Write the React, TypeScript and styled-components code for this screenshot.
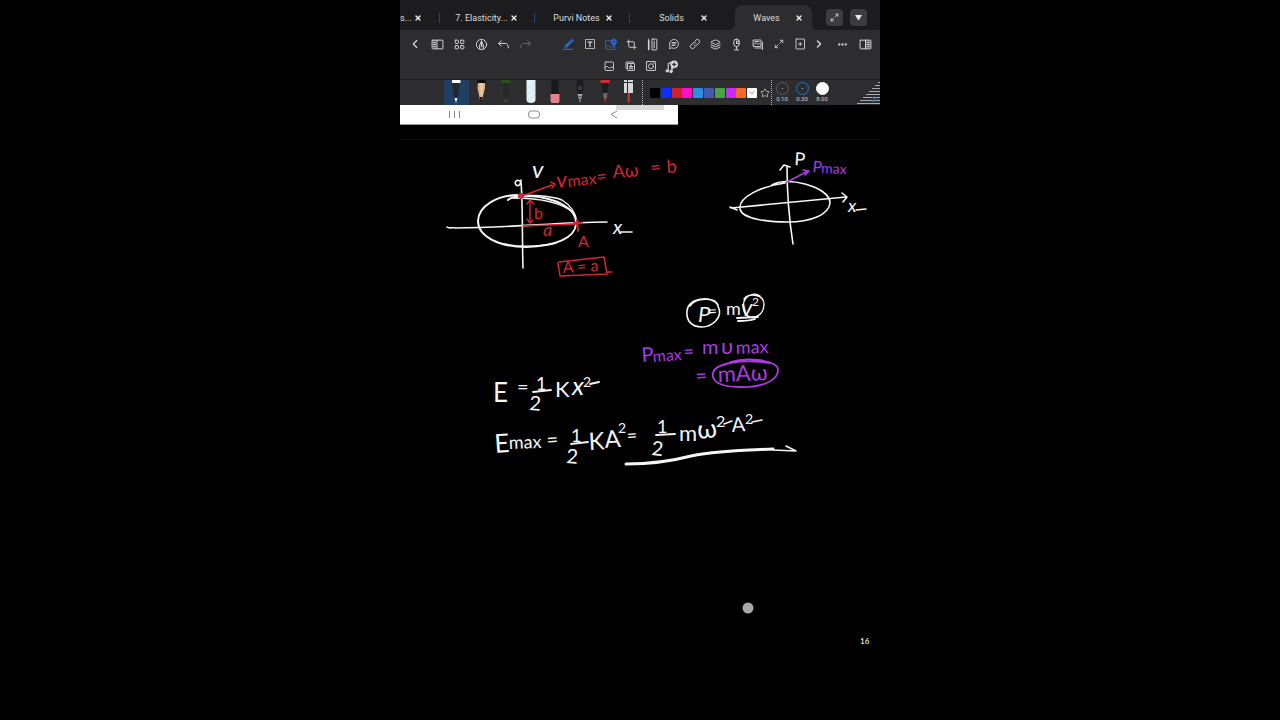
import React from "react";
import styled, { createGlobalStyle, css } from "styled-components";
import {
  ChevronLeft,
  ChevronRight,
  Crop,
  Layers,
  Maximize2,
  MoreHorizontal,
  Star,
  X,
} from "lucide-react";

const GlobalStyle = createGlobalStyle`
  *, *::before, *::after { box-sizing: border-box; }
  body { margin: 0; background: #000; color: #fff; font-family: Roboto, "Liberation Sans", sans-serif; }
  button { font: inherit; color: inherit; background: none; border: 0; padding: 0; margin: 0; }
`;

const Stage = styled.main`
  display: flex;
  justify-content: center;
  min-height: 100vh;
  background: #000;
`;

const Screen = styled.section`
  display: flex;
  flex-direction: column;
  width: 37.5%;
  min-width: 480px;
  overflow: hidden;
`;

/* Document tabs */

const TabBar = styled.nav`
  display: flex;
  align-items: flex-end;
  height: 30px;
  background: #1c1c1e;
`;

const Tab = styled.div<{ $active?: boolean; $clipped?: boolean }>`
  position: relative;
  display: flex;
  align-items: center;
  flex: none;
  width: ${(p) => (p.$clipped ? 40 : 95)}px;
  height: 25px;
  padding-left: ${(p) => (p.$clipped ? 0 : 11)}px;
  ${(p) =>
    p.$active &&
    css`
      width: 77px;
      margin: 0 10px;
      padding-left: 1px;
      border-radius: 8px 8px 0 0;
      background: #2d2d2f;
      &::before,
      &::after {
        content: "";
        position: absolute;
        bottom: 0;
        width: 6px;
        height: 6px;
      }
      &::before {
        right: 100%;
        background: radial-gradient(circle at 0 0, transparent 6px, #2d2d2f 6px);
      }
      &::after {
        left: 100%;
        background: radial-gradient(circle at 100% 0, transparent 6px, #2d2d2f 6px);
      }
    `}
`;

const TabLabel = styled.button<{ $clipped?: boolean }>`
  flex: none;
  width: ${(p) => (p.$clipped ? 12 : 61)}px;
  font-size: 9px;
  line-height: 12px;
  text-align: ${(p) => (p.$clipped ? "left" : "center")};
  white-space: nowrap;
  color: #dcdcdc;
`;

const CloseButton = styled.button<{ $clipped?: boolean }>`
  display: flex;
  margin-left: ${(p) => (p.$clipped ? 0 : -4)}px;
  padding: 2px;
  color: #eee;
`;

const Separator = styled.span`
  align-self: center;
  flex: none;
  width: 1px;
  height: 10px;
  margin: 5px 0 0 -1px;
  background: #1d4a78;
`;

const WindowButtons = styled.div`
  display: flex;
  gap: 7px;
  margin: 0 0 4px 4px;
`;

const WindowButton = styled.button`
  display: grid;
  place-items: center;
  width: 17px;
  height: 17px;
  border-radius: 4px;
  background: #3c3c3f;
  color: #e8e8e8;
`;

/* Tool rows */

const Toolbar = styled.div`
  display: flex;
  flex-direction: column;
  height: 50px;
  padding-top: 3px;
  background: #2d2d2f;
  border-bottom: 1px solid #1f1f21;
`;

const ToolRow = styled.div<{ $centered?: boolean }>`
  display: flex;
  justify-content: ${(p) => (p.$centered ? "center" : "flex-start")};
  padding-left: ${(p) => (p.$centered ? 0 : 4)}px;
`;

const ToolGroup = styled.div<{ $slot: number; $before?: number }>`
  display: grid;
  grid-auto-flow: column;
  grid-auto-columns: ${(p) => p.$slot}px;
  margin-left: ${(p) => p.$before ?? 0}px;
`;

const ToolButton = styled.button<{ $tone?: "blue" | "dim" }>`
  display: grid;
  place-items: center;
  height: 22px;
  color: ${(p) => (p.$tone === "blue" ? "#2d62c4" : p.$tone === "dim" ? "#666" : "#d6d6d6")};
`;

/* Pens, colours and stroke sizes */

const PenBar = styled.div`
  display: flex;
  height: 25px;
  padding-left: 44px;
  background: #2d2d2f;
`;

const Pens = styled.div`
  display: flex;
  flex: none;
  width: 198px;
`;

const PenButton = styled.button<{ $selected?: boolean }>`
  display: flex;
  justify-content: center;
  flex: 1;
  background: ${(p) => (p.$selected ? "#1f3f63" : "transparent")};
`;

const DottedRule = styled.span`
  flex: none;
  height: 25px;
  border-left: 1px dotted #b5b5b5;
`;

const Swatches = styled.div`
  display: flex;
  align-items: center;
  flex: none;
  width: 108px;
  margin-left: 7px;
`;

const SwatchSlot = styled.div`
  flex: 1;
  display: flex;
`;

const Swatch = styled.button<{ $color: string }>`
  display: grid;
  place-items: center;
  width: 10px;
  height: 10px;
  border-radius: 1px;
  background: ${(p) => p.$color};
`;

const StarButton = styled.button`
  display: grid;
  place-items: center;
  width: 13px;
  color: #c4c4c4;
`;

const Sizes = styled.div`
  display: flex;
`;

const SizeButton = styled.button`
  display: flex;
  flex-direction: column;
  align-items: center;
  width: 20px;
  padding-top: 2px;
  font-size: 6px;
  line-height: 8px;
  color: #d0d0d0;
`;

const SizeDot = styled.span<{ $ring?: string }>`
  display: grid;
  place-items: center;
  width: 13px;
  height: 13px;
  border-radius: 50%;
  border: 1px solid ${(p) => p.$ring ?? "#fff"};
  background: ${(p) => (p.$ring ? "transparent" : "#fff")};
  &::after {
    content: "";
    width: 1px;
    height: 1px;
    background: ${(p) => (p.$ring ? "#bbb" : "#fff")};
  }
`;

const ResizeCorner = styled.div`
  margin-left: auto;
  display: flex;
`;

/* Page */

const Paper = styled.div`
  flex: 1;
  display: flex;
  flex-direction: column;
  background: #000;
`;

const PastedBar = styled.div`
  display: flex;
  width: 278px;
  height: 20px;
  background: #fff;
  border-bottom: 1px solid #999;
`;

const PageEdge = styled.hr`
  width: 100%;
  margin: 14px 0 0;
  border: 0;
  border-top: 1px solid #101010;
`;

const InkCanvas = styled.svg`
  display: block;
  width: 100%;
  fill: none;
  stroke-linecap: round;
  stroke-linejoin: round;
`;

const InkText = styled.text`
  font-family: Lato, "Open Sans", sans-serif;
  stroke: none;
`;

const PageNumber = styled.text`
  font-family: Lato, sans-serif;
  font-size: 8px;
  font-weight: 700;
  fill: #ddd;
`;

const WHITE = "#f6f6f6";
const RED = "#d42534";
const PURPLE = "#a93be0";

type Note = [text: string, x: number, y: number, size: number, color: string, tilt?: number, italic?: boolean];

const notes: Note[] = [
  ["v", 532, 178, 24, WHITE, 0, true],
  ["x", 613, 234, 20, WHITE, 0, true],
  ["v", 557, 188, 22, RED, -6, true],
  ["max", 568, 187, 16, RED, -6],
  ["=", 597, 183, 18, RED, -6],
  ["Aω", 613, 178, 18, RED, -4],
  ["=", 651, 174, 18, RED, -6],
  ["b", 667, 173, 18, RED, -4],
  ["b", 534, 219, 16, RED],
  ["a", 543, 236, 18, RED, 0, true],
  ["A", 578, 247, 16, RED],
  ["A = a", 563, 273, 16, RED, -3],
  ["P", 794, 165, 18, WHITE, 4],
  ["x", 848, 212, 18, WHITE, 0, true],
  ["P", 812, 172, 16, PURPLE, 6],
  ["max", 821, 173, 14, PURPLE, 3],
  ["P", 698, 322, 22, WHITE, 0, true],
  ["=", 708, 317, 16, WHITE, -4],
  ["m", 726, 315, 18, WHITE],
  ["v", 741, 316, 24, WHITE, 0, true],
  ["2", 752, 306, 12, WHITE],
  ["P", 642, 362, 20, PURPLE, -4],
  ["max", 653, 362, 16, PURPLE, -4],
  ["=", 684, 358, 18, PURPLE, -4],
  ["m", 702, 354, 20, PURPLE],
  ["υ", 721, 354, 22, PURPLE],
  ["max", 736, 354, 18, PURPLE, -2],
  ["=", 696, 383, 20, PURPLE, -4],
  ["mAω", 718, 382, 22, PURPLE, -2],
  ["E", 493, 402, 26, WHITE],
  ["=", 517, 394, 20, WHITE],
  ["1", 536, 390, 18, WHITE],
  ["2", 529, 410, 20, WHITE, 4],
  ["K", 555, 397, 22, WHITE],
  ["x", 572, 395, 26, WHITE, 0, true],
  ["2", 583, 387, 14, WHITE],
  ["E", 495, 453, 26, WHITE, -4],
  ["max", 509, 449, 18, WHITE, -2],
  ["=", 547, 447, 20, WHITE, -4],
  ["1", 571, 442, 18, WHITE],
  ["2", 566, 463, 20, WHITE, 4],
  ["K", 589, 450, 24, WHITE, -3],
  ["A", 605, 448, 24, WHITE, -4],
  ["2", 618, 433, 14, WHITE],
  ["=", 627, 442, 18, WHITE, -3],
  ["1", 657, 433, 18, WHITE],
  ["2", 651, 455, 20, WHITE, 6],
  ["m", 679, 441, 22, WHITE],
  ["ω", 698, 439, 26, WHITE, -6],
  ["2", 716, 427, 16, WHITE],
  ["A", 732, 432, 20, WHITE, -4],
  ["2", 745, 424, 14, WHITE],
];

type StrokeLine = [d: string, color: string, width: number];

const strokes: StrokeLine[] = [
  /* velocity graph: axes and ellipse */
  ["M521 182 C523 205 522 240 523 268 M521 182 C517 178 514 182 516 185 C519 187 521 184 521 180", WHITE, 1.6],
  ["M447 227 C449 229 452 227 456 228 C510 228 560 222 607 222", WHITE, 1.6],
  ["M517 195 C498 195 478 206 478 221 C478 236 498 247 526 247 C556 246 575 238 576 224 C577 208 556 198 530 196 C518 196 510 198 508 200", WHITE, 1.9],
  ["M508 196 C530 194 553 196 562 200 C570 205 576 213 577 222 M513 198 C535 198 560 201 574 213 M505 244 C522 248 545 246 556 243", WHITE, 1.4],
  ["M621 232 L632 232", WHITE, 1.6],
  /* red measurements */
  ["M522 196 L552 185 M551 182 L555 184 L552 188", RED, 1.5],
  ["M523 226 L576 224", RED, 1.5],
  ["M530 201 L530 223 M527 204 L530 200 L534 204 M527 219 L530 223 L533 220", RED, 1.4],
  ["M577 220 L578 231 M574 223 L582 223", RED, 2],
  ["M559 262 L604 257 L607 274 L560 276 L558 263 M607 272 L612 272", RED, 1.5],
  /* momentum graph */
  ["M787 166 C787 195 790 225 793 244 M780 170 L784 165 L790 167", WHITE, 1.6],
  ["M731 208 L846 197 M730 207 L737 210 M842 193 L847 197 L843 202", WHITE, 1.6],
  ["M772 185 C780 180 794 181 805 184 C820 188 830 195 830 203 C829 215 810 222 788 222 C768 222 742 219 740 209 C738 197 762 186 785 183", WHITE, 1.6],
  ["M787 182 L808 171 M803 170 L809 171 L805 175", PURPLE, 1.6],
  ["M856 210 L866 209", WHITE, 1.5],
  /* circled momentum formula */
  ["M690 306 C695 298 716 296 718 306 C724 318 711 327 702 327 C691 327 686 320 687 311 C688 302 697 298 708 299 C712 300 716 302 718 305", WHITE, 1.6],
  ["M744 299 C750 292 764 295 764 304 C764 313 758 318 750 317 C743 315 741 304 746 298 C749 294 756 293 760 296", WHITE, 1.4],
  ["M737 318 L758 317 M738 321 C745 321 752 320 755 319", WHITE, 1.8],
  ["M730 362 C748 357 776 360 778 369 C779 382 758 388 740 387 C724 387 711 383 713 373 C715 363 742 359 770 363", PURPLE, 1.8],
  /* fraction bars and the final underline */
  ["M533 392 L551 390", WHITE, 1.8],
  ["M590 384 L599 382", WHITE, 1.8],
  ["M571 444 L588 442", WHITE, 1.8],
  ["M656 435 L675 434", WHITE, 1.8],
  ["M724 424 L732 421 M752 422 L762 420", WHITE, 1.6],
  ["M626 464 C650 464 672 461 691 456 C720 450 750 450 773 449", WHITE, 3],
  ["M773 450 L796 451 L786 446", WHITE, 1.6],
];

/* Line icons on a 24 unit grid */

const Glyph = ({ size = 13, width = 1.8, children }: { size?: number; width?: number; children: React.ReactNode }) => (
  <svg
    width={size}
    height={size}
    viewBox="0 0 24 24"
    fill="none"
    stroke="currentColor"
    strokeWidth={width}
    strokeLinecap="round"
    strokeLinejoin="round"
    aria-hidden="true"
  >
    {children}
  </svg>
);

const icons = {
  sidebar: (
    <Glyph>
      <rect x="2" y="4" width="20" height="16" rx="1" />
      <path d="M11 4v16M5 8h3M5 12h3M5 16h3" />
      <path d="M3 5h7v14H3z" fill="currentColor" fillOpacity="0.3" stroke="none" />
    </Glyph>
  ),
  grid: (
    <Glyph>
      <rect x="4" y="4" width="6" height="6" rx="1" />
      <rect x="14" y="4" width="6" height="6" rx="1" />
      <rect x="4" y="14" width="6" height="6" rx="1" />
      <rect x="14" y="14" width="6" height="6" rx="1" />
    </Glyph>
  ),
  nib: (
    <Glyph>
      <circle cx="12" cy="12" r="9.5" />
      <path d="M9 20l-1-5 4-10 4 10-1 5M12 6v8" />
      <circle cx="12" cy="15" r="1" />
    </Glyph>
  ),
  undo: (
    <Glyph>
      <path d="M8 5L3 10l5 5M3 10h12c4 0 6 3 6 8" />
    </Glyph>
  ),
  redo: (
    <Glyph>
      <path d="M16 5l5 5-5 5M21 10H9c-4 0-6 3-6 8" />
    </Glyph>
  ),
  pen: (
    <Glyph>
      <path d="M3 21h16" strokeWidth="2.5" />
      <path d="M5 18l1-4L19 2l2 2L9 17z" fill="currentColor" />
    </Glyph>
  ),
  text: (
    <Glyph size={12}>
      <rect x="3" y="3" width="18" height="18" strokeDasharray="3 1" strokeWidth="1.5" />
      <path d="M8 8h8M12 8v9" strokeWidth="2.5" />
    </Glyph>
  ),
  imagePin: (
    <Glyph>
      <path d="M12 5H3v16h17v-5M3 18l5-5 5 5 3-3 4 3" />
      <path d="M18 15l-4-5a5 5 0 1 1 8 0z" fill="currentColor" />
      <circle cx="18" cy="7" r="1.5" fill="#2d2d2f" stroke="none" />
    </Glyph>
  ),
  ruler: (
    <Glyph>
      <path d="M5 5v16" strokeWidth="3" />
      <path d="M5 2v2" />
      <rect x="11" y="2" width="9" height="20" rx="1" />
      <path d="M15 6v12" />
    </Glyph>
  ),
  comment: (
    <Glyph size={12}>
      <path d="M3 21l1-5a9 9 0 1 1 4 4zM8 9h8M8 12h8M8 15h5" />
    </Glyph>
  ),
  link: (
    <Glyph size={12}>
      <path d="M10 14a4 4 0 0 0 6 0l4-4a4 4 0 0 0-6-6l-2 2M14 10a4 4 0 0 0-6 0l-4 4a4 4 0 0 0 6 6l2-2" />
    </Glyph>
  ),
  mic: (
    <Glyph>
      <rect x="7" y="2" width="10" height="14" rx="5" />
      <path d="M12 16v5M8 22h8M12 6h5M12 10h5M12 6v4" />
    </Glyph>
  ),
  gallery: (
    <Glyph size={12}>
      <path d="M3 4h15v13H3zM6 20h15V8M3 14l5-5 4 4 3-3 3 3M21 20v3" />
      <path d="M6 7h8" />
    </Glyph>
  ),
  addPage: (
    <Glyph size={12}>
      <rect x="4" y="2" width="17" height="20" rx="1" />
      <path d="M12.5 9v6M9.5 12h6" />
    </Glyph>
  ),
  book: (
    <Glyph>
      <rect x="2" y="4" width="20" height="16" rx="1" />
      <path d="M12 4v16M15 8h4M15 12h4M15 16h4" />
      <path d="M13 5h8v14h-8z" fill="currentColor" fillOpacity="0.3" stroke="none" />
    </Glyph>
  ),
  picture: (
    <Glyph size={12}>
      <rect x="4" y="4" width="17" height="17" rx="2" />
      <path d="M4 15c2-3 5-3 7 0 2 2 3 1 4 0 2-2 4-1 6 1" />
    </Glyph>
  ),
  sticker: (
    <Glyph size={12}>
      <path d="M5 17H4V4h15v2" />
      <rect x="7" y="7" width="14" height="14" rx="1" />
      <path d="M14 10l1 3h3l-2 2 1 3-3-2-3 2 1-3-2-2h3z" />
    </Glyph>
  ),
  camera: (
    <Glyph size={12}>
      <rect x="3" y="3" width="18" height="18" rx="1" />
      <circle cx="12" cy="12.5" r="5" />
      <path d="M16 6h2" />
    </Glyph>
  ),
  music: (
    <Glyph size={13} width={2}>
      <path d="M6 20V7l5-3M13 21v-6" />
      <circle cx="4" cy="20" r="2" fill="currentColor" />
      <circle cx="11" cy="21" r="2" fill="currentColor" />
      <path d="M13 12l-1 4 4-2z" fill="currentColor" />
      <circle cx="17" cy="8" r="7" fill="currentColor" stroke="none" />
      <path d="M17 5v6M14 8h6" stroke="#2d2d2f" />
    </Glyph>
  ),
};

type Tool = [label: string, icon: React.ReactNode, tone?: "blue" | "dim"];

const navigationTools: Tool[] = [
  ["Back", <ChevronLeft size={14} />],
  ["Sidebar", icons.sidebar],
  ["Thumbnails", icons.grid],
  ["Pen only", icons.nib],
  ["Undo", icons.undo],
  ["Redo", icons.redo, "dim"],
];

const editTools: Tool[] = [
  ["Pen", icons.pen, "blue"],
  ["Text", icons.text],
  ["Insert", icons.imagePin, "blue"],
  ["Crop", <Crop size={11} />],
  ["Ruler", icons.ruler],
  ["Comment", icons.comment],
  ["Link", icons.link],
  ["Layers", <Layers size={11} />],
  ["Record", icons.mic],
  ["Gallery", icons.gallery],
  ["Expand", <Maximize2 size={10} />],
  ["Add page", icons.addPage],
];

const insertTools: Tool[] = [
  ["Picture", icons.picture],
  ["Sticker", icons.sticker],
  ["Camera", icons.camera],
  ["Audio", icons.music],
];

const Tools = ({ items }: { items: Tool[] }) => (
  <>
    {items.map(([label, icon, tone]) => (
      <ToolButton key={label} aria-label={label} $tone={tone}>
        {icon}
      </ToolButton>
    ))}
  </>
);

/* Pen bodies, 12 x 25, cut off by the upper edge of the bar */

const PenArt = ({ children }: { children: React.ReactNode }) => (
  <svg width="12" height="25" viewBox="0 0 12 25" aria-hidden="true">
    {children}
  </svg>
);

const pens: [string, React.ReactNode][] = [
  ["Fountain pen", <PenArt><path d="M2 3h8L7.500 18h-3z" fill="#27282b" /><path d="M2 0h8.500v3H2z" fill="#fff" /><path d="M4.500 18h3L6 23z" fill="#e9f5ff" /></PenArt>],
  ["Pencil", <PenArt><path d="M3 3h7v5L7 20H5L2.500 8z" fill="#d9b48a" /><path d="M5.500 3h2v12h-2z" fill="#efcfa5" /><path d="M2.500 0h8v3h-8z" fill="#0c0c0c" /><path d="M4.500 17h3L6 22z" fill="#0c0c0c" /></PenArt>],
  ["Brush", <PenArt><path d="M2 3h8L8 19H4z" fill="#262b25" /><path d="M1.500 0h9v3h-9z" fill="#29501f" /><path d="M4.500 19h3v3h-3z" fill="#3b472f" /></PenArt>],
  ["Highlighter", <PenArt><path d="M1.500 0h9v20c0 4-9 4-9 0z" fill="#e2f2f7" /><path d="M2 9l8-6M2 15l8-6M3 20l7-5" stroke="#c8e3ec" /></PenArt>],
  ["Eraser", <PenArt><path d="M2.500 0h7v14h-7z" fill="#1a1a1c" /><path d="M1.500 14h9v7q0 2-2 2h-5q-2 0-2-2z" fill="#e3828a" /></PenArt>],
  ["Pattern pen", <PenArt><path d="M2.500 0h7v9l-2 6h-3l-2-6z" fill="#1c1c1e" /><circle cx="6" cy="8" r="1.500" fill="none" stroke="#666" strokeWidth="0.700" /><path d="M3.500 14h5L6 23z" fill="#aaa" /><path d="M4.500 16l3 1M5 19l2 1" stroke="#444" /></PenArt>],
  ["Red pen", <PenArt><path d="M2.500 3h7L8 15H4z" fill="#1e1e20" /><path d="M1.500 0h9v3h-9z" fill="#d32d31" /><path d="M4 13h4.500L8 18H4.500z" fill="#666" /><path d="M5 18h2.500L6 23z" fill="#d32d31" /></PenArt>],
  ["Laser", <PenArt><path d="M0 0h9v13H0z" fill="#d9d9d9" /><path d="M3.500 0v13M0 2.500h9" stroke="#29292b" /><path d="M3.500 13h2.500v8l-1.500 2h-1z" fill="#c62a30" /></PenArt>],
];

const swatches = ["#000000", "#0a30ff", "#d31f2b", "#ff10c8", "#2f8de0", "#4459ab", "#45a545", "#c62df2", "#f56c24", "#ffffff"];

const tabs = ["7. Elasticity...", "Purvi Notes", "Solids"];

const Close = ({ label, clipped }: { label: string; clipped?: boolean }) => (
  <CloseButton aria-label={`Close ${label}`} $clipped={clipped}>
    <X size={8} strokeWidth={4} />
  </CloseButton>
);

export default function App() {
  return (
    <>
      <GlobalStyle />
      <Stage>
        <Screen>
          <TabBar>
            <Tab $clipped>
              <TabLabel $clipped>s...</TabLabel>
              <Close label="s..." clipped />
            </Tab>
            {tabs.map((name) => (
              <React.Fragment key={name}>
                <Separator />
                <Tab>
                  <TabLabel>{name}</TabLabel>
                  <Close label={name} />
                </Tab>
              </React.Fragment>
            ))}
            <Tab $active>
              <TabLabel>Waves</TabLabel>
              <Close label="Waves" />
            </Tab>
            <WindowButtons>
              <WindowButton aria-label="Full screen">
                <Maximize2 size={9} />
              </WindowButton>
              <WindowButton aria-label="More tabs">
                <svg width="7" height="5" viewBox="0 0 7 5" aria-hidden="true">
                  <path d="M0 0h7L4 5H3z" fill="currentColor" />
                </svg>
              </WindowButton>
            </WindowButtons>
          </TabBar>

          <Toolbar>
            <ToolRow>
              <ToolGroup $slot={22}>
                <Tools items={navigationTools} />
              </ToolGroup>
              <ToolGroup $slot={21} $before={22}>
                <Tools items={editTools} />
              </ToolGroup>
              <ToolGroup $slot={17}>
                <ToolButton aria-label="Next tools">
                  <ChevronRight size={12} strokeWidth={3} />
                </ToolButton>
              </ToolGroup>
              <ToolGroup $slot={23} $before={4}>
                <ToolButton aria-label="More">
                  <MoreHorizontal size={11} strokeWidth={3} />
                </ToolButton>
                <ToolButton aria-label="Reading view">{icons.book}</ToolButton>
              </ToolGroup>
            </ToolRow>
            <ToolRow $centered>
              <ToolGroup $slot={21}>
                <Tools items={insertTools} />
              </ToolGroup>
            </ToolRow>
          </Toolbar>

          <PenBar>
            <Pens>
              {pens.map(([label, art], i) => (
                <PenButton key={label} aria-label={label} $selected={i === 0}>
                  {art}
                </PenButton>
              ))}
            </Pens>
            <DottedRule />
            <Swatches>
              {swatches.map((color) => (
                <SwatchSlot key={color}>
                  <Swatch $color={color} aria-label={`Colour ${color}`}>
                    {color === "#ffffff" && (
                      <svg width="6" height="4" viewBox="0 0 6 4" aria-hidden="true">
                        <path d="M0.5 0.5L3 3l2.5-2.5" fill="none" stroke="#999" />
                      </svg>
                    )}
                  </Swatch>
                </SwatchSlot>
              ))}
            </Swatches>
            <StarButton aria-label="Favourites">
              <Star size={10} strokeWidth={2} />
            </StarButton>
            <DottedRule />
            <Sizes>
              <SizeButton>
                <SizeDot $ring="#5d5d5f" />
                0.10
              </SizeButton>
              <SizeButton>
                <SizeDot $ring="#2374c4" />
                0.30
              </SizeButton>
              <SizeButton>
                <SizeDot />
                8.00
              </SizeButton>
            </Sizes>
            <ResizeCorner>
              <svg width="24" height="25" viewBox="0 0 24 25" aria-hidden="true">
                <path
                  d="M22 2.5h2M19 5.5h5M16 8.500h8M13 11.5h11M10 14.5h14M7 17.5h17M4 20.5h20M1 23.5h23"
                  stroke="#a9a9a9"
                />
                <path d="M16 17l4 4M20 17v4h-4" stroke="#2470c8" fill="none" />
              </svg>
            </ResizeCorner>
          </PenBar>

          <Paper>
            <PastedBar>
              <svg width="277" height="19" viewBox="0 0 277 19" fill="none" stroke="#8a8a8a" aria-hidden="true">
                <path d="M216 0h48v5h-48z" fill="#d9d9d9" stroke="none" />
                <path d="M49.5 6v7M54.5 6v7M59.5 6v7" />
                <rect x="128.5" y="6" width="11" height="7" rx="3" />
                <path d="M217 6l-6 3.5 6 3.5" />
              </svg>
            </PastedBar>
            <PageEdge />
            <InkCanvas viewBox="400 140 480 580" role="img" aria-label="Handwritten notes on waves">
              {strokes.map(([d, color, width]) => (
                <path key={d} d={d} stroke={color} strokeWidth={width} />
              ))}
              <circle cx="521" cy="196" r="3" fill={RED} />
              <circle cx="577" cy="223" r="2" fill={RED} />
              {notes.map(([text, x, y, size, color, tilt = 0, italic]) => (
                <InkText
                  key={`${x}-${y}`}
                  x={x}
                  y={y}
                  fontSize={size}
                  fill={color}
                  fontStyle={italic ? "italic" : "normal"}
                  transform={`rotate(${tilt} ${x} ${y})`}
                >
                  {text}
                </InkText>
              ))}
              <circle cx="748" cy="608" r="5.5" fill="#a8a8aa" />
              <PageNumber x="860" y="644">
                16
              </PageNumber>
            </InkCanvas>
          </Paper>
        </Screen>
      </Stage>
    </>
  );
}
